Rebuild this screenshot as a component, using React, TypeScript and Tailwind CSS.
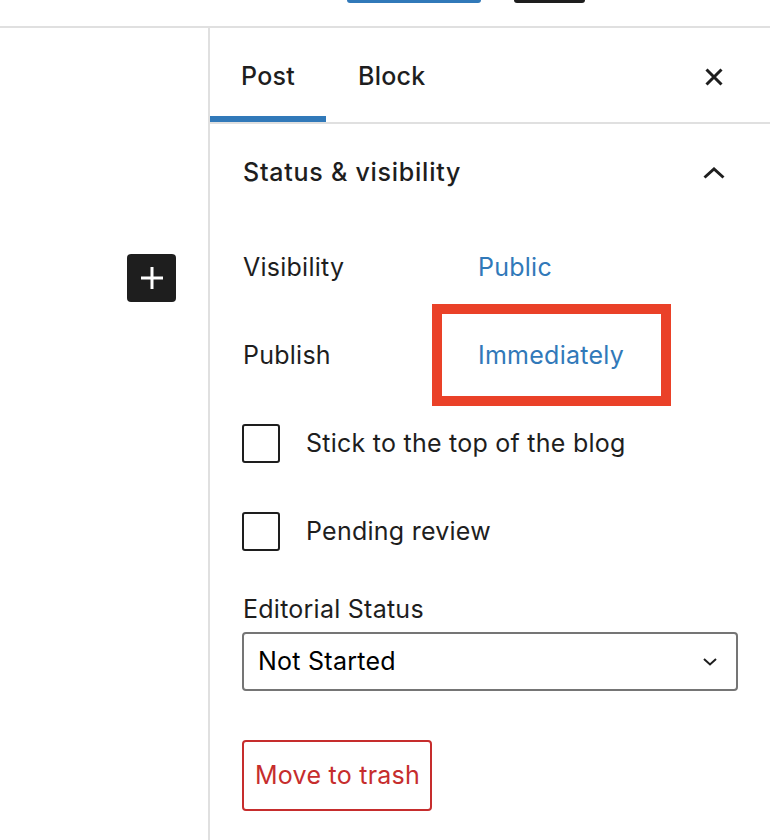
export default function App() {
  return (
    <div className="flex h-[840px] w-[770px] flex-col overflow-hidden bg-white font-['Inter','Noto_Sans',sans-serif] text-[#1e1e1e]">
      {/* top toolbar, cut off at the top of the shot */}
      <div className="flex h-[28px] shrink-0 items-start border-b-2 border-[#e0e0e0] pl-[347px]">
        <div className="h-[3px] w-[134px] rounded-b-[3px] bg-[#3179b9]" />
        <div className="ml-[33px] h-[3px] w-[71px] rounded-b-[3px] bg-[#1e1e1e]" />
      </div>

      <div className="flex flex-1">
        {/* editor canvas */}
        <div className="w-[208px] shrink-0 pl-[127px] pt-[226px]">
          <button className="flex h-[48px] w-[49px] items-center justify-center rounded-[4px] bg-[#1e1e1e]">
            <svg width="24" height="24" viewBox="0 0 24 24" fill="none">
              <path d="M12 1v22M1 12h22" stroke="white" strokeWidth="3" />
            </svg>
          </button>
        </div>

        {/* settings sidebar */}
        <div className="flex flex-1 flex-col border-l-2 border-[#e0e0e0] text-[25px] tracking-[0.01em]">
          <div className="flex h-[96px] items-stretch justify-between border-b-2 border-[#e0e0e0] pr-[32px]">
            <div className="flex">
              <div className="flex w-[116px] items-center justify-center pt-1 font-medium shadow-[inset_0_-6px_0_#3179b9]">
                Post
              </div>
              <div className="flex items-center px-[32px] pt-1 font-medium">Block</div>
            </div>
            <div className="flex items-center pt-1">
              <button className="flex h-[48px] w-[48px] items-center justify-center">
                <svg width="18" height="18" viewBox="0 0 18 18" fill="none">
                  <path d="M1.5 1.5l15 15M16.5 1.5l-15 15" stroke="#1e1e1e" strokeWidth="3" />
                </svg>
              </button>
            </div>
          </div>

          <div className="flex flex-col pl-[32px] pr-[32px]">
            <div className="flex h-[98px] items-center justify-between">
              <h2 className="pl-px font-medium tracking-[0.03em]">Status &amp; visibility</h2>
              <button className="flex h-[48px] w-[48px] items-center justify-center">
                <svg width="22" height="12" viewBox="0 0 22 12" fill="none">
                  <path d="M1.5 10.5L11 2l9.5 8.5" stroke="#1e1e1e" strokeWidth="3" />
                </svg>
              </button>
            </div>

            <div className="flex h-[88px] items-center pl-px pt-[2px] leading-[30px]">
              <span className="w-[235px]">Visibility</span>
              <span className="text-[#3179b9]">Public</span>
            </div>
            <div className="flex h-[88px] items-center pl-px pt-[2px] leading-[30px]">
              <span className="w-[235px]">Publish</span>
              <span className="relative text-[#3179b9]">
                Immediately
                <span className="absolute -bottom-[36px] -left-[46px] -right-[47px] -top-[36px] border-[10px] border-[#ea4128]" />
              </span>
            </div>

            <label className="flex h-[88px] items-center gap-[26px] pt-[2px] leading-[30px]">
              <span className="h-[39px] w-[38px] shrink-0 rounded-[3px] border-2 border-[#1e1e1e]" />
              Stick to the top of the blog
            </label>
            <label className="flex h-[88px] items-center gap-[26px] pt-[2px] leading-[30px]">
              <span className="h-[39px] w-[38px] shrink-0 rounded-[3px] border-2 border-[#1e1e1e]" />
              Pending review
            </label>

            <div className="mt-[20px] pl-px leading-[30px]">Editorial Status</div>
            <div className="mt-[8px] flex h-[59px] items-center justify-between rounded-[4px] border-2 border-[#757575] pl-[14px] pr-[19px]">
              <span className="text-black">Not Started</span>
              <svg width="14" height="8" viewBox="0 0 14 8" fill="none">
                <path d="M1 1l6 5.5L13 1" stroke="#1e1e1e" strokeWidth="2" />
              </svg>
            </div>

            <div className="mt-[49px]">
              <button className="flex h-[71px] items-center rounded-[4px] border-2 border-[#c62d2d] pl-[11px] pr-[10px] text-[#c62d2d]">
                Move to trash
              </button>
            </div>
          </div>
        </div>
      </div>
    </div>
  )
}
